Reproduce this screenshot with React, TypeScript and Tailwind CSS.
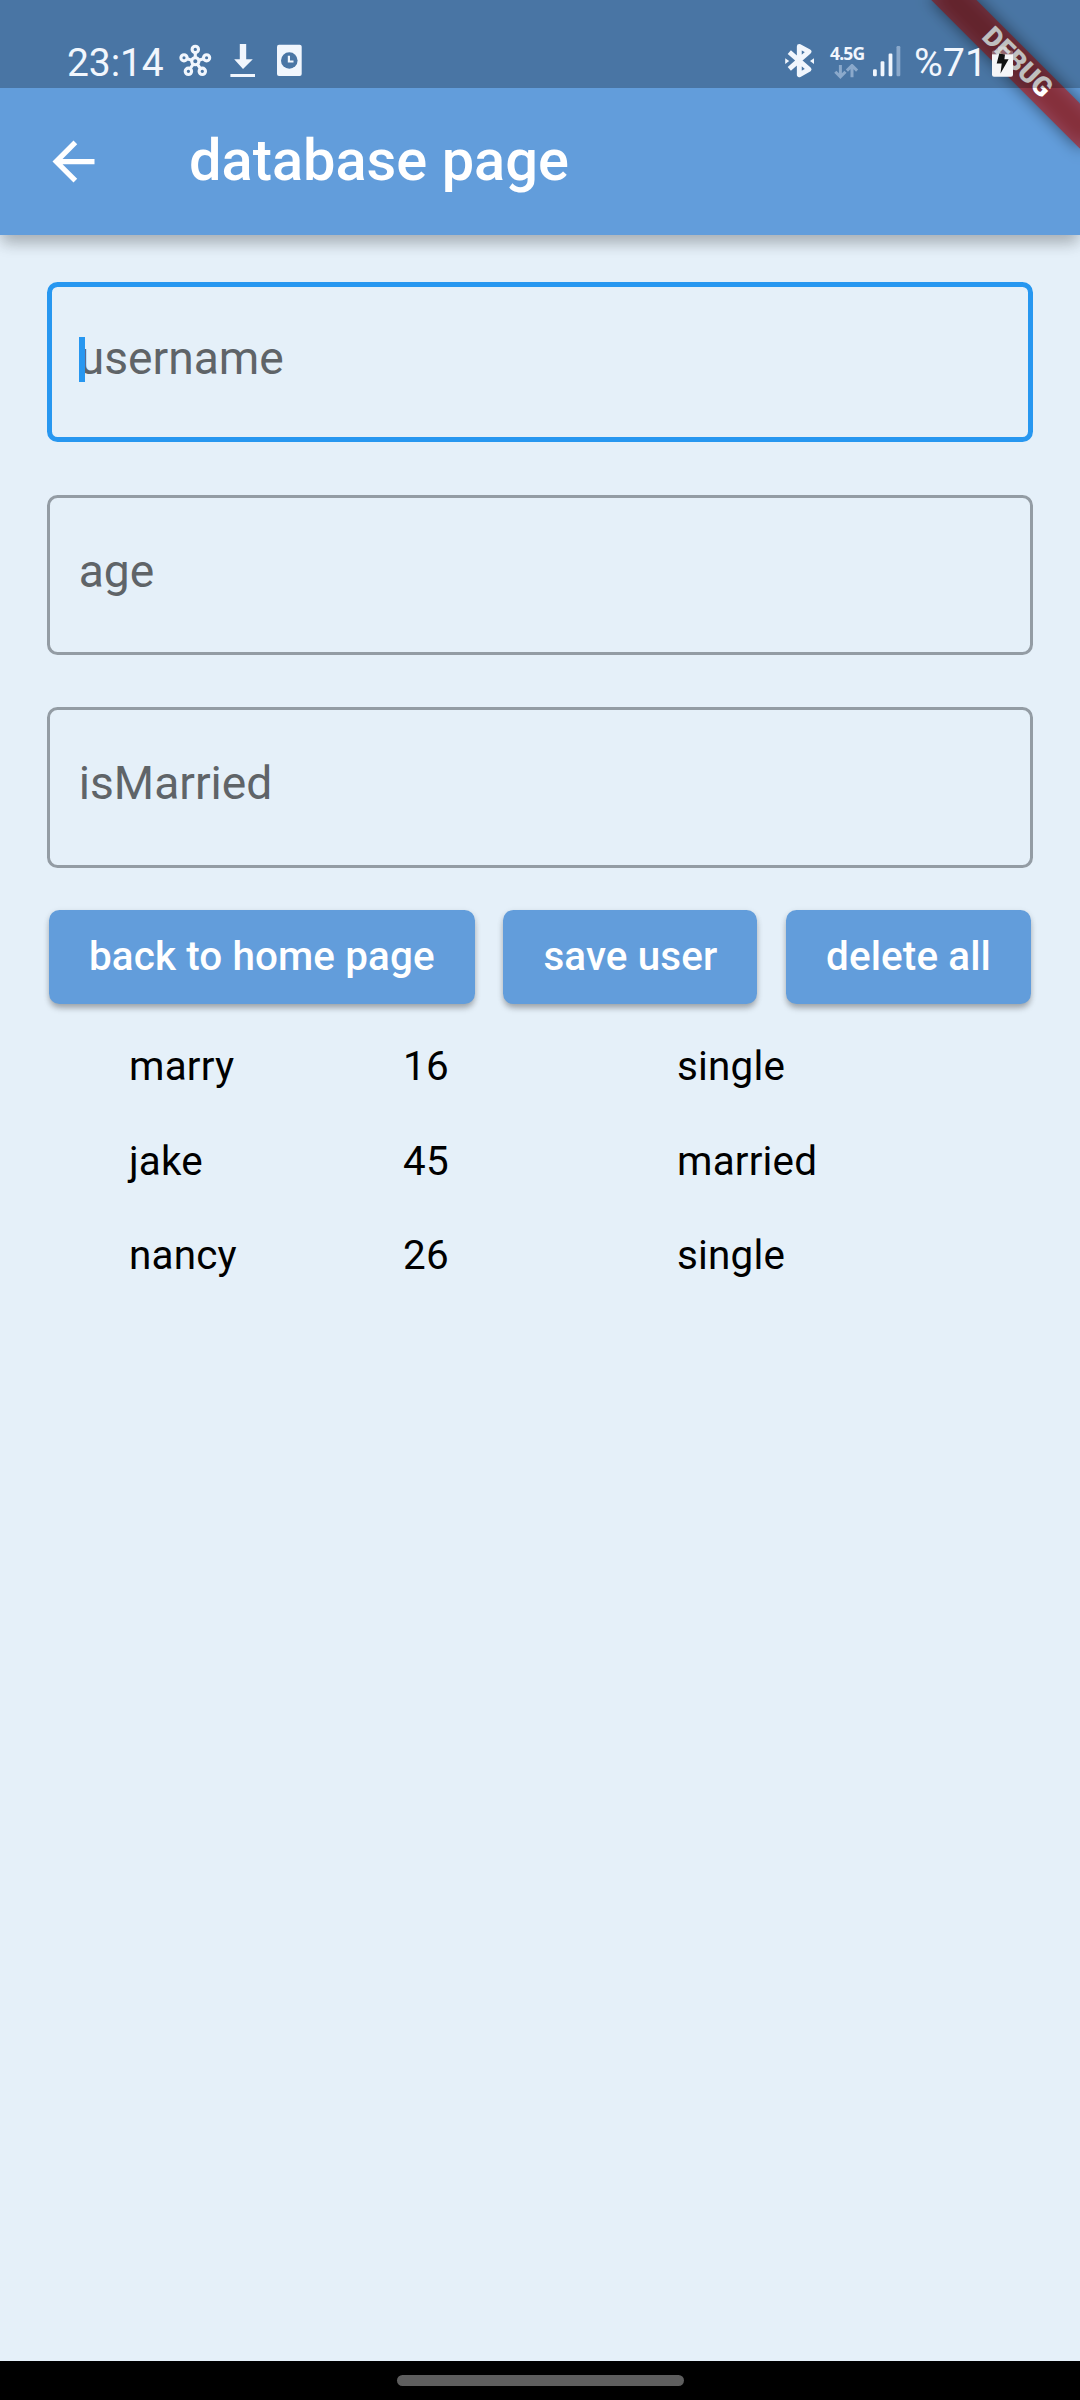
const INK = "#f1f6fd";

function StatusBar() {
  return (
    <div className="relative flex h-[88px] items-start overflow-hidden bg-black/25 pr-[65px] text-[#f1f6fd]">
      <span className="ml-[67px] w-[112px] pt-[39px] text-[39px] leading-[49px] tracking-[-0.1px]">23:14</span>
      <svg width="33" height="88" viewBox="179 0 33 88" fill="none" stroke={INK} strokeWidth="3.1">
        <circle cx="195.3" cy="61.2" r="3.6" />
        <circle cx="195.3" cy="49.4" r="3.2" />
        <circle cx="184" cy="57.8" r="3.1" />
        <circle cx="206.6" cy="57.8" r="3.1" />
        <circle cx="188.4" cy="71.3" r="3.2" />
        <circle cx="202.3" cy="71.3" r="3.2" />
        <path d="M195.3 52.8v5M187 58.8l5 1.4M203.6 58.8l-5 1.4M190.2 68.6l3-4.4M200.4 68.6l-3-4.4" />
      </svg>
      <svg className="ml-[16px]" width="30" height="88" viewBox="228 0 30 88" fill={INK}>
        <path d="M239.8 44h6.4v15.3h6.6L243 69l-8.8-9.7h5.6zM230.4 74H255v3h-24.6z" />
      </svg>
      <svg className="ml-[17px]" width="29" height="88" viewBox="275 0 29 88" fill={INK}>
        <rect x="277" y="44.7" width="24.7" height="31.3" rx="2" />
        <circle cx="289.3" cy="60.5" r="8.3" fill="#4a76a5" />
        <path d="M288.9 55.7v5.8h4.6" fill="none" stroke={INK} strokeWidth="2.2" />
      </svg>
      <svg className="ml-auto" width="34" height="88" viewBox="783 0 34 88">
        <path d="M789.3 52.2L809 69.3 799.3 74.8V46.4L809 51.6 789.3 68.8" fill="none" stroke={INK} strokeWidth="4.9" strokeLinejoin="round" />
        <path d="M785.2 58.2v5.8l4-2.9zM814 58.2v5.8l-4-2.9z" fill={INK} />
      </svg>
      <div className="ml-[11px] flex w-[38px] flex-col pt-[42px]">
        <span className="pl-[2px] font-['Noto_Sans'] text-[17.5px] font-bold leading-[22px] tracking-[-0.8px]">4.5G</span>
        <svg width="38" height="16" viewBox="828 64 38 16" fill="none" stroke="#8ba9cb" strokeWidth="3">
          <path d="M840.4 65v12M835.3 71.8l5.1 5.1 5.1-5.1M852 77.2V66M846.9 70.6l5.1-5.1 5.1 5.1" />
        </svg>
      </div>
      <svg className="ml-[5px]" width="31" height="88" viewBox="871 0 31 88" fill={INK}>
        <rect x="873" y="69.3" width="3.8" height="7" rx="1.2" />
        <rect x="880.6" y="61.3" width="3.8" height="15" rx="1.2" />
        <rect x="888.6" y="53.6" width="3.8" height="22.7" rx="1.2" />
        <rect x="896.5" y="46" width="3.8" height="30.3" rx="1.2" fill="#8ba9cb" />
      </svg>
      <span className="ml-[12px] w-[76px] pt-[38px] text-[39.4px] leading-[49px]">%71</span>
      <svg width="25" height="88" viewBox="990 0 25 88">
        <path d="M998 46.5h9v4h4.5a1.5 1.5 0 0 1 1.5 1.5v2.3h-21v-2.3a1.5 1.5 0 0 1 1.5-1.5h4.5z" fill="#fff" fillOpacity="0.3" />
        <path d="M992 54.3h21v20.4a2 2 0 0 1-2 2h-17a2 2 0 0 1-2-2z" fill="#f5f5f7" />
        <path d="M999.3 53.5l5.7 1-0.6 4.7h4.2l-8.1 14.2 1.2-9.8h-5z" fill="#111" />
      </svg>
    </div>
  );
}

function DebugBanner() {
  return (
    <div className="absolute left-[911.9px] top-[47.35px] flex h-[31.5px] w-[210px] rotate-45 items-center justify-center">
      <div className="absolute inset-0 bg-black/50 blur-[8px]" />
      <div className="absolute inset-0 bg-[#b71c1c]/[0.627]" />
      <span className="relative text-[27px] font-black leading-[31px] text-white">DEBUG</span>
    </div>
  );
}

function Field({ label, focused = false }: { label: string; focused?: boolean }) {
  return (
    <div
      className={
        focused
          ? "relative h-[160.5px] rounded-[10.5px] border-[5px] border-[#2797f0] pl-[26.5px] pt-[44px]"
          : "relative h-[160.5px] rounded-[10.5px] border-[3px] border-[#939ca4] pl-[28.5px] pt-[46px]"
      }
    >
      <span className="block text-[46.2px] leading-[54px] text-[#5f6468]">{label}</span>
      {focused && <span className="absolute left-[26.5px] top-[50px] h-[45px] w-[6px] bg-[#2797f0]" />}
    </div>
  );
}

function Button({ label }: { label: string }) {
  return (
    <button className="h-[94.5px] rounded-[10.5px] bg-[#629ddb] px-[40px] text-[40.425px] font-medium tracking-[0.1px] text-white shadow-[0_5px_6px_-1px_rgba(0,0,0,0.25),0_2px_6px_0_rgba(0,0,0,0.12)]">
      {label}
    </button>
  );
}

const users = [
  ["marry", "16", "single"],
  ["jake", "45", "married"],
  ["nancy", "26", "single"],
];

export default function App() {
  return (
    <div className="flex h-[2400px] w-[1080px] flex-col overflow-hidden bg-[#e5f0f9] font-['Roboto',sans-serif]">
      <header className="relative isolate z-10 h-[234.6px] bg-[#629ddb] shadow-[0_10px_14px_-2px_rgba(0,0,0,0.23),0_3px_20px_0_rgba(0,0,0,0.08)]">
        <DebugBanner />
        <StatusBar />
        <div className="flex h-[147px] items-center pl-[42px]">
          <svg width="63" height="63" viewBox="0 0 24 24" fill="#fff">
            <path d="M20 11H7.83l5.59-5.59L12 4l-8 8 8 8 1.41-1.41L7.83 13H20z" />
          </svg>
          <h1 className="ml-[84px] pb-[3px] text-[57.75px] font-medium leading-[68px] text-white">database page</h1>
        </div>
      </header>
      <main className="flex flex-1 flex-col pt-[47.4px]">
        <div className="flex flex-col gap-[52.2px] px-[47.25px]">
          <Field label="username" focused />
          <Field label="age" />
          <Field label="isMarried" />
        </div>
        <div className="mt-[42px] flex justify-between px-[49px]">
          <Button label="back to home page" />
          <Button label="save user" />
          <Button label="delete all" />
        </div>
        <div className="mt-[16px] flex flex-col pl-[129px]">
          {users.map(([name, age, status]) => (
            <div key={name} className="grid h-[94.5px] grid-cols-[274px_274px_1fr] items-center text-[40.425px] tracking-[0.2px] text-black">
              <span>{name}</span>
              <span>{age}</span>
              <span>{status}</span>
            </div>
          ))}
        </div>
      </main>
      <footer className="flex h-[39px] justify-center bg-black pt-[14px]">
        <div className="h-[11px] w-[287px] rounded-full bg-[#5e5e5e]" />
      </footer>
    </div>
  );
}
